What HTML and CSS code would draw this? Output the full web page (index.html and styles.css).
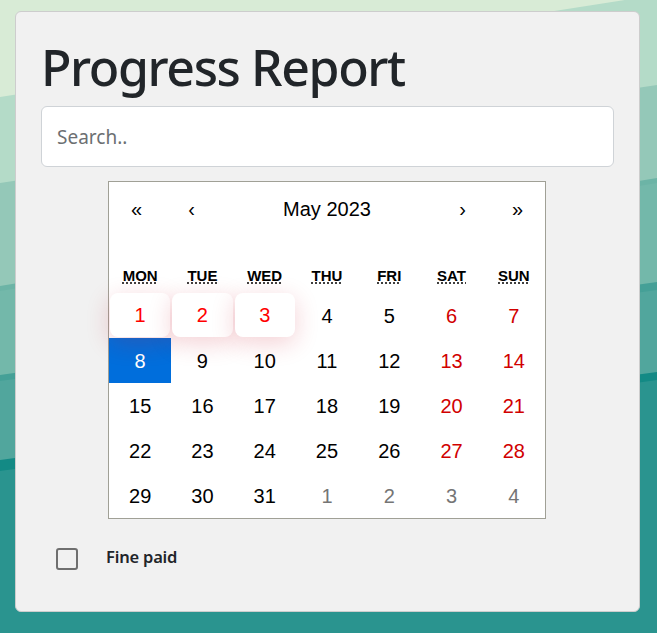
FILE: index.html
```html
<!DOCTYPE html>
<html lang="en">
<head>
<meta charset="utf-8">
<title>Progress Report</title>
<link rel="stylesheet" href="styles.css">
</head>
<body>
<svg class="bg" viewBox="0 0 657 633" preserveAspectRatio="none" aria-hidden="true">
  <rect x="0" y="0" width="657" height="633" fill="#d8ebd6"/>
  <polygon points="0,97 657,-5 657,633 0,633" fill="#b4dbc8"/>
  <polygon points="0,183 657,85 657,633 0,633" fill="#94c8b8"/>
  <polygon points="0,286 657,178 657,633 0,633" fill="#6cb4a6"/>
  <polygon points="0,291 657,183 657,633 0,633" fill="#73b8aa"/>
  <polygon points="0,375 657,282 657,633 0,633" fill="#45a097"/>
  <polygon points="0,381 657,290 657,633 0,633" fill="#51a69d"/>
  <polygon points="0,460 657,372 657,633 0,633" fill="#138a85"/>
  <polygon points="0,471 657,380 657,633 0,633" fill="#2a948f"/>
</svg>

<main class="card">
  <h1 class="title">Progress Report</h1>
  <input class="search" type="text" placeholder="Search..">

  <div class="calendar">
    <div class="cal-nav">
      <button class="nav-btn" type="button">«</button>
      <button class="nav-btn" type="button">‹</button>
      <button class="nav-label" type="button">May 2023</button>
      <button class="nav-btn" type="button">›</button>
      <button class="nav-btn" type="button">»</button>
    </div>
    <div class="weekdays">
      <div class="weekday"><abbr title="Monday">Mon</abbr></div>
      <div class="weekday"><abbr title="Tuesday">Tue</abbr></div>
      <div class="weekday"><abbr title="Wednesday">Wed</abbr></div>
      <div class="weekday"><abbr title="Thursday">Thu</abbr></div>
      <div class="weekday"><abbr title="Friday">Fri</abbr></div>
      <div class="weekday"><abbr title="Saturday">Sat</abbr></div>
      <div class="weekday"><abbr title="Sunday">Sun</abbr></div>
    </div>
    <div class="days">
      <button class="day marked" type="button">1</button>
      <button class="day marked" type="button">2</button>
      <button class="day marked" type="button">3</button>
      <button class="day" type="button">4</button>
      <button class="day" type="button">5</button>
      <button class="day weekend" type="button">6</button>
      <button class="day weekend" type="button">7</button>

      <button class="day active" type="button">8</button>
      <button class="day" type="button">9</button>
      <button class="day" type="button">10</button>
      <button class="day" type="button">11</button>
      <button class="day" type="button">12</button>
      <button class="day weekend" type="button">13</button>
      <button class="day weekend" type="button">14</button>

      <button class="day" type="button">15</button>
      <button class="day" type="button">16</button>
      <button class="day" type="button">17</button>
      <button class="day" type="button">18</button>
      <button class="day" type="button">19</button>
      <button class="day weekend" type="button">20</button>
      <button class="day weekend" type="button">21</button>

      <button class="day" type="button">22</button>
      <button class="day" type="button">23</button>
      <button class="day" type="button">24</button>
      <button class="day" type="button">25</button>
      <button class="day" type="button">26</button>
      <button class="day weekend" type="button">27</button>
      <button class="day weekend" type="button">28</button>

      <button class="day" type="button">29</button>
      <button class="day" type="button">30</button>
      <button class="day" type="button">31</button>
      <button class="day neighbor" type="button">1</button>
      <button class="day neighbor" type="button">2</button>
      <button class="day neighbor" type="button">3</button>
      <button class="day neighbor" type="button">4</button>
    </div>
  </div>

  <label class="check">
    <span class="check-box"></span>
    <span class="check-label">Fine paid</span>
  </label>
</main>
</body>
</html>
```

FILE: styles.css
```css
* {
  box-sizing: border-box;
}

html, body {
  margin: 0;
  padding: 0;
}

body {
  width: 657px;
  height: 633px;
  overflow: hidden;
  position: relative;
  font-family: "Noto Sans", "Open Sans", sans-serif;
  color: #212529;
  padding-top: 11px;
  padding-left: 15px;
}

.bg {
  position: absolute;
  left: 0;
  top: 0;
  width: 657px;
  height: 633px;
  z-index: -1;
}

.card {
  width: 625px;
  background: #f1f1f1;
  border: 1px solid #cdcdcd;
  border-radius: 6px;
  padding: 25px 25px 41px 25px;
  display: flex;
  flex-direction: column;
}

.title {
  margin: 0 0 9px 0;
  font-size: 50px;
  line-height: 60px;
  font-weight: 500;
  letter-spacing: -1.4px;
  color: #212529;
}

.search {
  display: block;
  width: 100%;
  height: 61px;
  border: 1px solid #cfd3d7;
  border-radius: 6px;
  background: #fff;
  padding: 0 15px;
  font-family: "Noto Sans", "Open Sans", sans-serif;
  font-size: 19px;
  color: #212529;
  outline: none;
}

.search::placeholder {
  color: #6c6f72;
}

.calendar {
  width: 438px;
  margin: 14px 0 0 67px;
  background: #fff;
  border: 1px solid #a0a096;
  font-family: "Liberation Sans", Arial, sans-serif;
  color: #000;
}

.cal-nav {
  display: flex;
  height: 55px;
  margin-bottom: 20px;
}

.cal-nav button {
  margin: 0;
  border: 0;
  background: none;
  font-family: "Liberation Sans", Arial, sans-serif;
  font-size: 20px;
  color: #000;
  padding: 0;
}

.nav-btn {
  width: 55px;
  flex: 0 0 55px;
}

.nav-label {
  flex: 1 1 auto;
}

.weekdays {
  display: grid;
  grid-template-columns: repeat(7, 1fr);
  height: 36px;
  align-items: center;
  text-align: center;
  text-transform: uppercase;
  font-size: 15px;
  font-weight: bold;
}

.weekday abbr {
  text-decoration: underline dotted;
  text-underline-offset: 2px;
}

.days {
  display: grid;
  grid-template-columns: repeat(7, 1fr);
}

.day {
  margin: 0;
  border: 0;
  background: none;
  height: 45px;
  padding: 0;
  font-family: "Liberation Sans", Arial, sans-serif;
  font-size: 20px;
  line-height: 20px;
  color: #000;
  text-align: center;
}

.day.weekend {
  color: #d10000;
}

.day.neighbor {
  color: #757575;
}

.day.active {
  background: #006edc;
  color: #fff;
}

.day.marked {
  margin: 0 1px;
  height: 44px;
  align-self: start;
  background: #fff;
  color: #ff0000;
  border-radius: 8px;
  box-shadow: 0 6px 24px rgba(200, 20, 40, 0.2);
  position: relative;
}

.check {
  display: flex;
  align-items: center;
  margin-top: 29px;
  height: 22px;
  padding-left: 15px;
}

.check-box {
  width: 22px;
  height: 22px;
  border: 2px solid #6f6f6f;
  border-radius: 3px;
  background: #f1f1f1;
  flex: 0 0 22px;
}

.check-label {
  margin-left: 28px;
  font-size: 16.5px;
  font-weight: 600;
  letter-spacing: -0.2px;
  color: #212529;
  line-height: 22px;
  margin-top: -4px;
}
```
